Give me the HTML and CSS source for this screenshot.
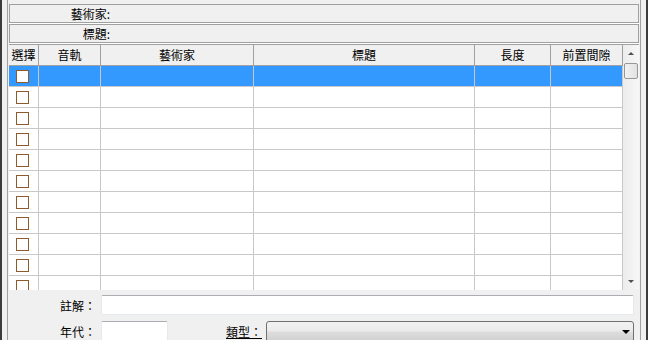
FILE: index.html
```html
<!DOCTYPE html>
<html lang="zh-Hant">
<head>
  <meta charset="UTF-8" />
  <title>曲目資訊</title>
  <link rel="stylesheet" href="styles.css">
</head>
<body>

<div class="window">
  <div class="panel">
    <div class="info-row"><span class="info-label">藝術家:</span></div>
    <div class="info-row"><span class="info-label">標題:</span></div>

    <div class="list">
      <div class="list-main">
        <div class="list-head">
          <div class="col-check">選擇</div>
          <div class="col-track">音軌</div>
          <div class="col-artist">藝術家</div>
          <div class="col-title">標題</div>
          <div class="col-length">長度</div>
          <div class="col-gap">前置間隙</div>
        </div>
        <div class="list-body" id="listBody"></div>
      </div>
      <div class="scrollbar">
        <div class="scroll-btn"><span class="arrow-up"></span></div>
        <div class="thumb"></div>
        <div class="track"></div>
        <div class="scroll-btn"><span class="arrow-down"></span></div>
      </div>
    </div>

    <div class="details">
      <div class="field-row">
        <label class="field-label">註解：</label>
        <input type="text" class="text-input comment">
      </div>
      <div class="field-row">
        <label class="field-label">年代：</label>
        <input type="text" class="text-input year">
        <label class="genre-label">類型：</label>
        <div class="combo"><span class="combo-arrow"></span></div>
      </div>
    </div>
  </div>
  <div class="edge"></div>
</div>

<script>
  const body = document.getElementById("listBody");
  for (let i = 0; i < 11; i++) {
    const row = `<div class="list-row${i === 0 ? " selected" : ""}">
      <div class="col-check"><span class="checkbox"></span></div>
      <div class="col-track"></div>
      <div class="col-artist"></div>
      <div class="col-title"></div>
      <div class="col-length"></div>
      <div class="col-gap"></div>
    </div>`;
    body.innerHTML += row;
  }
</script>

</body>
</html>
```

FILE: styles.css
```css
* { box-sizing: border-box; }

body {
  margin: 0;
  background: #f0f0f0;
  font-family: "Noto Sans CJK TC", "Noto Sans", sans-serif;
  font-size: 12px;
  color: #000;
  overflow: hidden;
}

.window {
  display: flex;
  height: 340px;
  border-left: 2px solid #3c3c3c;
}

.panel {
  margin-left: 5px;
  width: 634px;
  border-left: 1px solid #a0a0a0;
  border-right: 1px solid #a0a0a0;
  padding: 4px 1px 0;
  display: flex;
  flex-direction: column;
}

.edge {
  flex: 1;
  border-right: 2px solid #3c3c3c;
}

.info-row {
  height: 19px;
  margin-bottom: 1px;
  border: 1px solid #a0a0a0;
  box-shadow: 0 1px 0 #fff;
  display: flex;
  align-items: center;
}

.info-label {
  width: 100px;
  text-align: right;
  line-height: 17px;
}

.list {
  display: flex;
  height: 246px;
  border-top: 1px solid #a0a0a0;
  background: #fff;
}

.list-main { width: 614px; }

.list-head,
.list-row {
  display: flex;
}

.list-head > div,
.list-row > div {
  flex: none;
  border-right: 1px solid #c8c8c8;
}

.col-check { width: 30px; }
.col-track { width: 62px; }
.col-artist { width: 153px; }
.col-title { width: 221px; }
.col-length { width: 76px; }
.col-gap { width: 72px; }

.list-head {
  height: 21px;
  background: #f0f0f0;
  border-bottom: 1px solid #a0a0a0;
}

.list-head > div {
  border-right-color: #a0a0a0;
  text-align: center;
  line-height: 20px;
}

.list-body {
  height: 224px;
  overflow: hidden;
}

.list-row {
  height: 21px;
  border-bottom: 1px solid #c8c8c8;
}

.list-row.selected { background: #3399ff; }

.list-row .col-check {
  display: flex;
  align-items: center;
  padding-left: 7px;
}

.checkbox {
  width: 13px;
  height: 13px;
  border: 1px solid #8e5b2e;
  background: #fff;
}

.scrollbar {
  width: 16px;
  display: flex;
  flex-direction: column;
  background: linear-gradient(to right, #ececec, #f7f7f7);
}

.scroll-btn {
  height: 17px;
  display: flex;
  align-items: center;
  justify-content: center;
}

.arrow-up,
.arrow-down {
  width: 0;
  height: 0;
  border-left: 3px solid transparent;
  border-right: 3px solid transparent;
}

.arrow-up { border-bottom: 3px solid #505050; }
.arrow-down { border-top: 3px solid #505050; }

.thumb {
  height: 16px;
  margin: 1px 1px 0;
  border: 1px solid #979797;
  border-radius: 2px;
  background: linear-gradient(to right, #f2f2f2, #e2e2e2);
}

.track { flex: 1; }

.details {
  flex: 1;
  padding-top: 5px;
  display: flex;
  flex-direction: column;
  gap: 6px;
}

.field-row {
  display: flex;
  align-items: center;
  height: 20px;
}

.field-label {
  width: 87px;
  margin-right: 5px;
  text-align: right;
}

.text-input {
  height: 20px;
  border: 1px solid #e3e9ef;
  border-top-color: #abadb3;
  border-radius: 2px;
  background: #fff;
  padding: 0;
  margin: 0;
}

.text-input.comment { width: 533px; }
.text-input.year { width: 67px; }

.genre-label {
  margin-left: 58px;
  margin-right: 4px;
  text-decoration: underline;
}

.combo {
  width: 368px;
  height: 22px;
  margin-top: 2px;
  border: 1px solid #707070;
  border-radius: 3px;
  background: linear-gradient(#f2f2f2 0%, #ebebeb 45%, #dddddd 50%, #cfcfcf 100%);
  display: flex;
  align-items: center;
  justify-content: flex-end;
  padding-right: 3px;
}

.combo-arrow {
  width: 0;
  height: 0;
  border-left: 4px solid transparent;
  border-right: 4px solid transparent;
  border-top: 4px solid #000;
}
```
